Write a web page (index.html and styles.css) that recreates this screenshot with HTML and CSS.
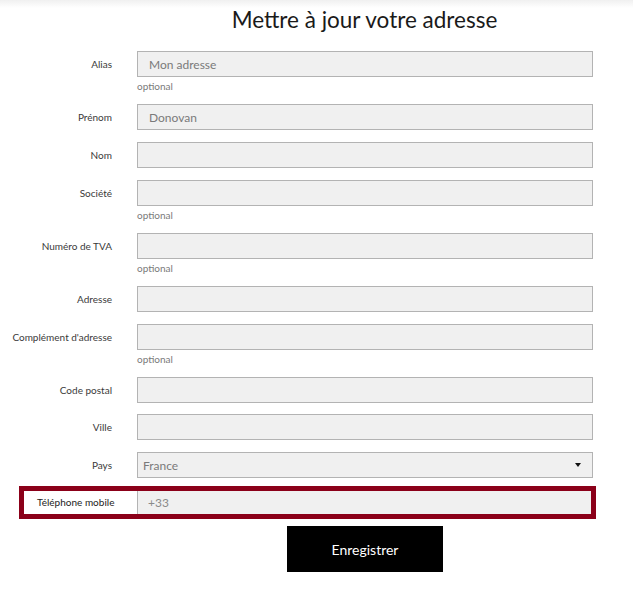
FILE: index.html
```html
<!DOCTYPE html>
<html lang="fr">
<head>
<meta charset="utf-8">
<title>Mettre à jour votre adresse</title>
<link rel="stylesheet" href="styles.css">
</head>
<body>
<div class="topshade"></div>
<main class="page">
  <h1 class="title">Mettre à jour votre adresse</h1>
  <form class="form">
    <div class="row">
      <label class="lbl">Alias</label>
      <div class="field">
        <input class="inp" type="text" placeholder="Mon adresse">
        <span class="opt">optional</span>
      </div>
    </div>
    <div class="row">
      <label class="lbl">Prénom</label>
      <div class="field"><input class="inp" type="text" placeholder="Donovan"></div>
    </div>
    <div class="row">
      <label class="lbl">Nom</label>
      <div class="field"><input class="inp" type="text"></div>
    </div>
    <div class="row">
      <label class="lbl">Société</label>
      <div class="field">
        <input class="inp" type="text">
        <span class="opt">optional</span>
      </div>
    </div>
    <div class="row">
      <label class="lbl">Numéro de TVA</label>
      <div class="field">
        <input class="inp" type="text">
        <span class="opt">optional</span>
      </div>
    </div>
    <div class="row">
      <label class="lbl">Adresse</label>
      <div class="field"><input class="inp" type="text"></div>
    </div>
    <div class="row">
      <label class="lbl">Complément d'adresse</label>
      <div class="field">
        <input class="inp" type="text">
        <span class="opt">optional</span>
      </div>
    </div>
    <div class="row tight">
      <label class="lbl">Code postal</label>
      <div class="field"><input class="inp" type="text"></div>
    </div>
    <div class="row">
      <label class="lbl">Ville</label>
      <div class="field"><input class="inp" type="text"></div>
    </div>
    <div class="row">
      <label class="lbl">Pays</label>
      <div class="field">
        <div class="sel">
          <span class="sel-text">France</span>
          <span class="caret"></span>
        </div>
      </div>
    </div>
    <div class="phone">
      <label class="phone-lbl">Téléphone mobile</label>
      <input class="phone-inp" type="text" placeholder="+33">
    </div>
    <div class="actions">
      <button class="btn" type="button">Enregistrer</button>
    </div>
  </form>
</main>
</body>
</html>
```
FILE: styles.css
```css
* { box-sizing: border-box; }
html, body { margin: 0; padding: 0; background: #fff; }
body {
  font-family: Lato, "Liberation Sans", sans-serif;
  color: #222;
  width: 633px;
  height: 589px;
  overflow: hidden;
}
.topshade {
  height: 8px;
  background: linear-gradient(#f0f0f0, #fff);
}
.title {
  margin: 0;
  height: 43px;
  font-weight: 400;
  font-size: 22.5px;
  line-height: 24px;
  text-align: center;
  padding-left: 96px;
  color: #1a1a1a;
}
.form { display: flex; flex-direction: column; }
.row {
  display: grid;
  grid-template-columns: 112px 456px;
  column-gap: 25px;
  margin-bottom: 12px;
}
.row.tight { margin-bottom: 11px; }
.lbl {
  font-size: 10px;
  color: #3a3a3a;
  text-align: right;
  line-height: 26px;
  height: 26px;
}
.field { display: flex; flex-direction: column; }
.inp {
  display: block;
  width: 456px;
  height: 26px;
  margin: 0;
  border: 1px solid #b3b3b3;
  background: #f0f0f0;
  font-family: Lato, "Liberation Sans", sans-serif;
  font-size: 12px;
  color: #7a7a7a;
  padding: 0 11px;
  outline: none;
}
.inp::placeholder { color: #7a7a7a; opacity: 1; }
.opt {
  font-size: 10px;
  color: #7a7a7a;
  line-height: 15px;
  height: 15px;
  padding-top: 2px;
}
.sel {
  width: 456px;
  height: 26px;
  border: 1px solid #b3b3b3;
  background: #f0f0f0;
  display: flex;
  align-items: center;
  justify-content: space-between;
  padding: 0 11px 0 5px;
}
.sel-text { font-size: 12px; color: #7a7a7a; }
.caret {
  width: 0; height: 0;
  border-left: 3px solid transparent;
  border-right: 3px solid transparent;
  border-top: 4px solid #111;
}
.phone {
  margin-left: 19px;
  width: 577px;
  height: 33px;
  margin-top: -4px;
  border: 5px solid #8b0019;
  display: flex;
  background: #fff;
}
.phone-lbl {
  width: 113px;
  font-size: 10px;
  color: #222;
  line-height: 23px;
  padding-left: 13px;
}
.phone-inp {
  flex: 1;
  height: 23px;
  margin: 0;
  border: 0;
  border-left: 1px solid #b3b3b3;
  background: #f0f0f0;
  font-family: Lato, "Liberation Sans", sans-serif;
  font-size: 12px;
  color: #7a7a7a;
  padding: 0 10px;
  outline: none;
}
.phone-inp::placeholder { color: #8a8a8a; opacity: 1; }
.actions {
  display: flex;
  padding-left: 287px;
  margin-top: 7px;
}
.btn {
  width: 156px;
  height: 46px;
  background: #000;
  color: #fff;
  border: 0;
  font-family: Lato, "Liberation Sans", sans-serif;
  font-size: 14px;
  padding: 0;
}
```
